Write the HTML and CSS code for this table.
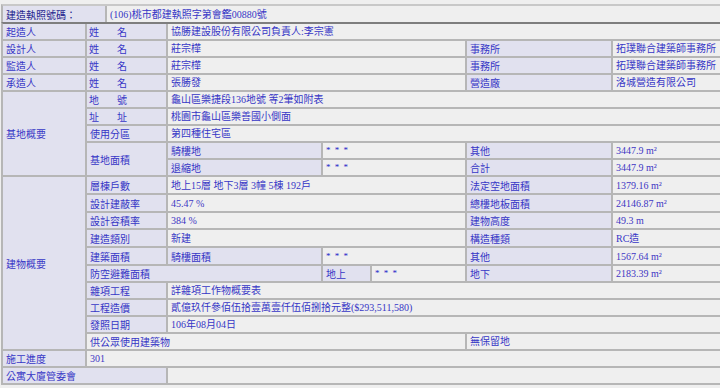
FILE: index.html
```html
<!DOCTYPE html>
<html lang="zh-Hant">
<head>
<meta charset="utf-8">
<title>建造執照</title>
<link rel="stylesheet" href="styles.css">
</head>
<body>
<table class="head">
  <colgroup><col class="h1"><col class="h2"></colgroup>
  <tr><th class="top">建造執照號碼：</th><td>(106)桃市都建執照字第會鑑00880號</td></tr>
</table>
<table class="main">
  <colgroup>
    <col class="c1"><col class="c2"><col class="c3"><col class="c4"><col class="c5"><col class="c6"><col class="c7">
  </colgroup>
  <tr><th>起造人</th><th class="sp">姓<span class="gap"></span>名</th><td colspan="5">協勝建設股份有限公司負責人:李宗憲</td></tr>
  <tr><th>設計人</th><th class="sp">姓<span class="gap"></span>名</th><td colspan="3">莊宗樺</td><th>事務所</th><td>拓璞聯合建築師事務所</td></tr>
  <tr><th>監造人</th><th class="sp">姓<span class="gap"></span>名</th><td colspan="3">莊宗樺</td><th>事務所</th><td>拓璞聯合建築師事務所</td></tr>
  <tr><th>承造人</th><th class="sp">姓<span class="gap"></span>名</th><td colspan="3">張勝發</td><th>營造廠</th><td>洛城營造有限公司</td></tr>
  <tr><th rowspan="5">基地概要</th><th class="sp">地<span class="gap"></span>號</th><td colspan="5">龜山區樂捷段136地號 等2筆如附表</td></tr>
  <tr><th class="sp">址<span class="gap"></span>址</th><td colspan="5">桃園市龜山區樂善國小側面</td></tr>
  <tr><th>使用分區</th><td colspan="5">第四種住宅區</td></tr>
  <tr><th rowspan="2">基地面積</th><th>騎樓地</th><td colspan="2" class="stars">* * *</td><th>其他</th><td class="num">3447.9 m²</td></tr>
  <tr><th>退縮地</th><td colspan="2" class="stars">* * *</td><th>合計</th><td class="num">3447.9 m²</td></tr>
  <tr class="tall"><th rowspan="10">建物概要</th><th>層棟戶數</th><td colspan="3">地上15層 地下3層 3幢 5棟 192戶</td><th>法定空地面積</th><td class="num">1379.16 m²</td></tr>
  <tr class="tall"><th>設計建蔽率</th><td colspan="3" class="num">45.47 %</td><th>總樓地板面積</th><td class="num">24146.87 m²</td></tr>
  <tr><th>設計容積率</th><td colspan="3" class="num">384 %</td><th>建物高度</th><td class="num">49.3 m</td></tr>
  <tr class="tall"><th>建造類別</th><td colspan="3">新建</td><th>構造種類</th><td>RC造</td></tr>
  <tr class="tall"><th>建築面積</th><th>騎樓面積</th><td colspan="2" class="stars">* * *</td><th>其他</th><td class="num">1567.64 m²</td></tr>
  <tr><th colspan="2">防空避難面積</th><th>地上</th><td class="stars">* * *</td><th>地下</th><td class="num">2183.39 m²</td></tr>
  <tr><th>雜項工程</th><td colspan="5">詳雜項工作物概要表</td></tr>
  <tr><th>工程造價</th><td colspan="5">貳億玖仟參佰伍拾壹萬壹仟伍佰捌拾元整($293,511,580)</td></tr>
  <tr><th>發照日期</th><td colspan="5">106年08月04日</td></tr>
  <tr><td colspan="4" class="plain">供公眾使用建築物</td><td colspan="2">無保留地</td></tr>
  <tr><th>施工進度</th><td colspan="6" class="num">301</td></tr>
  <tr><th colspan="2">公寓大廈管委會</th><td colspan="5"></td></tr>
</table>
</body>
</html>
```

FILE: styles.css
```css
html, body {
  margin: 0;
  padding: 0;
  background: #efefef;
  overflow: hidden;
}
body {
  font-family: "Liberation Serif", "Noto Sans CJK TC", serif;
  font-size: 10px;
  color: #3636c6;
}
table {
  border-collapse: separate;
  border-spacing: 0;
  table-layout: fixed;
  margin-left: 1px;
  border-left: 2px solid #b6b6b6;
}
th, td {
  padding: 0 3px;
  line-height: 13px;
  font-weight: normal;
  text-align: left;
  vertical-align: middle;
  white-space: nowrap;
  overflow: hidden;
  border-right: 2px solid #b6b6b6;
  border-bottom: 2px solid #b6b6b6;
}
th {
  background: #e1e1ef;
  font-family: "Noto Sans CJK TC", sans-serif;
}
td {
  background: #efefef;
}
td.plain {
  font-family: "Noto Sans CJK TC", sans-serif;
}
.head {
  width: 722px;
  margin-top: 4px;
  border-top: 2px solid #c8c8c8;
}
.head tr { height: 16px; }
.head th, .head td { border-bottom: 0; }
.head th.top { color: #24248e; }
.h1 { width: 104px; }
.h2 { width: 616px; }
.main {
  width: 722px;
  border-top: 2px solid #7e7e7e;
}
.main tr { height: 17px; }
.main tr.tall { height: 18px; }
.c1 { width: 84px; }
.c2 { width: 81px; }
.c3 { width: 155px; }
.c4 { width: 49px; }
.c5 { width: 95px; }
.c6 { width: 146px; }
.c7 { width: 110px; }
.sp { padding-left: 2px; }
.gap {
  display: inline-block;
  width: 18px;
}
.stars {
  font-size: 9px;
  letter-spacing: 1px;
  color: #2424c8;
}
.num {
  color: #4036c4;
}
```
